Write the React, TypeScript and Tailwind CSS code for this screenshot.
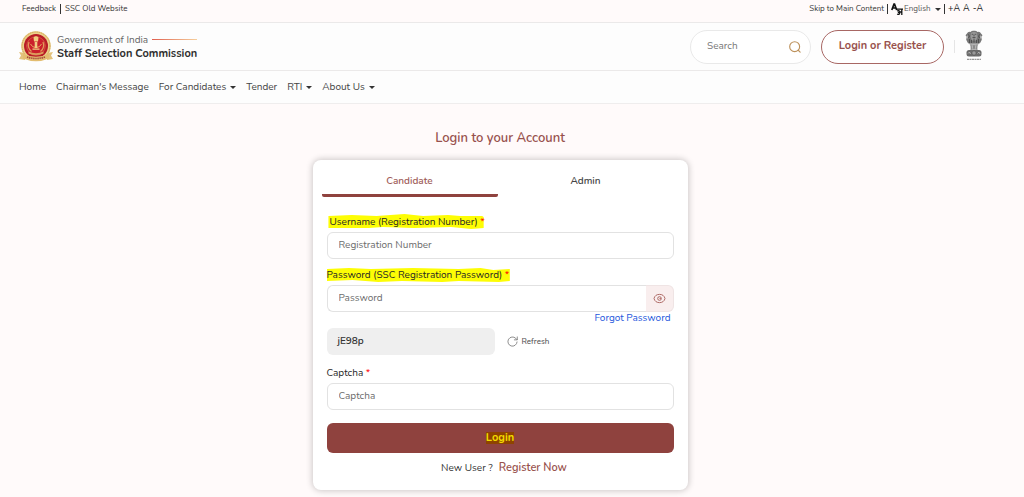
import React, { useState } from 'react';

interface NavEntry {
    label: string;
    hasMenu?: boolean;
}

const navEntries: NavEntry[] = [
    { label: 'Home' },
    { label: "Chairman's Message" },
    { label: 'For Candidates', hasMenu: true },
    { label: 'Tender' },
    { label: 'RTI', hasMenu: true },
    { label: 'About Us', hasMenu: true },
];

const inputClass = 'block w-full h-[27px] rounded-md border border-[#e2e2e2] bg-white px-[11px] pb-0.5 text-[10px] text-[#333] placeholder:text-[#6c6c6c] outline-none focus:border-[#8f423e]';

const Caret = () => (
    <svg viewBox="0 0 6 3" className="w-1.5 h-[3px] shrink-0" fill="#333" aria-hidden="true">
        <path d="M0 0h6L3 3z" />
    </svg>
);

const SscLogo = () => (
    <svg viewBox="0 0 36 32" className="w-9 h-8 shrink-0" role="img" aria-label="SSC">
        <path d="M1 21l6 1v7l-6-1 2-3.500zM35 21l-6 1v7l6-1-2-3.500z" fill="#e3c27c" />
        <circle cx="18" cy="15" r="14.800" fill="#ecd08a" />
        <circle cx="18" cy="15" r="14" fill="none" stroke="#cda356" strokeWidth="1" strokeDasharray="1.500 0.700" />
        <circle cx="18" cy="15" r="12" fill="#b81c26" />
        <circle cx="18" cy="15" r="9.300" fill="#cb202b" stroke="#d8704f" strokeWidth="0.700" />
        <path d="M11 11a8.500 8.500 0 0 0 2.500 9.500M25 11a8.500 8.500 0 0 1-2.500 9.500" fill="none" stroke="#e09a5a" strokeWidth="1.300" />
        <path d="M12.500 13a6 6 0 0 0 11 0" fill="none" stroke="#e8a960" strokeWidth="1" />
        <path d="M15.500 6.500q2.500-2.500 5 0l-.5 4h-4zM16.700 11h2.600v6h-2.600zM14.500 17.500h7v1.300h-7z" fill="#f1cd82" />
        <path d="M10.500 20.500q7.500 3.500 15 0v2q-7.500 3-15 0z" fill="#dd9e5c" />
        <path d="M5 23q13 5.500 26 0v4.500q-13 5.500-26 0z" fill="#e3bd70" />
        <path d="M9 26q9 3 18 0" fill="none" stroke="#a5463b" strokeWidth="1.600" strokeDasharray="1.400 0.700" />
    </svg>
);

const StateEmblem = () => (
    <svg viewBox="0 0 18 31" className="w-[18px] h-[31px] shrink-0" role="img" aria-label="State Emblem of India">
        <path d="M5.500 2Q7 .3 9 .8q2-.5 3.500 1.200 2.500-.7 3.500 1.500l1.500 1.800-1.200 1.400.5 3-1.500 3-1.300 1H4l-1.300-1-1.500-3 .5-3L.5 5.300 2 3.500Q3 1.300 5.500 2z" fill="#777" />
        <path d="M6 3q3-2 6 0l.5 4-1.500 3.500H7L5.500 7z" fill="#999" />
        <path d="M6.700 4.300h1.500m1.600 0h1.500M9 4.500v2M7.500 7.500h3M3 4.500l1.500 1.300L3.500 8m11.500-3.500-1.500 1.300 1 2.200M4.500 9v4M13.500 9v4M6.500 10v3m5-3v3M9 8.500v4" fill="none" stroke="#3d3d3d" strokeWidth="0.700" />
        <path d="M2.500 5.500v3M15.500 5.500v3" stroke="#c4c4c4" strokeWidth="0.700" />
        <path d="M4.500 14h9l-1 2.200v3l1 1.300h-9l1-1.300v-3z" fill="#b4b4b4" />
        <path d="M6 14.500l.5 5M12 14.500l-.5 5M8 15l2 4M10 15l-2 4" stroke="#666" strokeWidth="0.600" />
        <rect x="1.500" y="20" width="15" height="6.500" rx="2.500" fill="#6b6b6b" />
        <circle cx="9" cy="23" r="2" fill="#ddd" stroke="#444" strokeWidth="0.600" />
        <path d="M9 21v4M7 23h4" stroke="#444" strokeWidth="0.500" />
        <path d="M3 23.500l1.500-1.500 1 2M12.500 23.500l1.500-1.500 1 2" fill="none" stroke="#ccc" strokeWidth="0.700" />
        <path d="M2 29.300h14" stroke="#999" strokeWidth="1.300" strokeDasharray="2.500 0.500 1.500 0.500" />
    </svg>
);

const TitleRule = () => (
    <svg viewBox="0 0 45 2" className="ml-1 w-[45px] h-0.5 shrink-0" aria-hidden="true">
        <defs>
            <linearGradient id="title-rule" x1="0" y1="0" x2="1" y2="0">
                <stop offset="0" stopColor="#e0604f" />
                <stop offset="1" stopColor="#f6cf9c" />
            </linearGradient>
        </defs>
        <rect width="45" height="1" fill="url(#title-rule)" />
    </svg>
);

const SearchIcon = () => (
    <svg viewBox="0 0 14 14" className="w-3 h-3" fill="none" stroke="#bd915b" strokeWidth="1.300" strokeLinecap="round" aria-hidden="true">
        <circle cx="6.600" cy="6.600" r="5.800" />
        <path d="M10.800 10.800L13 13" />
    </svg>
);

const EyeIcon = () => (
    <svg viewBox="0 0 14 12" className="w-[13px] h-[11px]" fill="none" stroke="#a8605c" strokeWidth="1" aria-hidden="true">
        <path d="M1 6q1.200-4.500 6-4.500T13 6q-1.200 4.500-6 4.500T1 6z" />
        <circle cx="7" cy="6" r="2" />
        <path d="M7 6h1.500" />
    </svg>
);

const RefreshIcon = () => (
    <svg viewBox="0 0 12 12" className="w-[11px] h-[11px]" fill="none" stroke="#777" strokeWidth="0.900" strokeLinecap="round" strokeLinejoin="round" aria-hidden="true">
        <path d="M11 6.500A5 5 0 1 1 9.500 2.500L11 4" />
        <path d="M11.200 1v3.200H8" />
    </svg>
);

const TopBar = () => (
    <div className="flex h-[23px] items-center justify-between border-b border-[#ebe9e9] bg-[#fffafa] pb-1 pl-[22px] pr-[41px] text-[8px] text-[#333]">
        <div className="flex items-center">
            <a href="#feedback" className="border-r border-[#333] pr-1 leading-[10px]">Feedback</a>
            <a href="#old" className="pl-1">SSC Old Website</a>
        </div>
        <div className="flex items-center">
            <a href="#main" className="border-r border-[#333] pr-[3px] leading-[10px]">Skip to Main Content</a>
            <svg viewBox="0 0 12 12" className="ml-[3px] w-3 h-3" fill="none" stroke="#111" strokeWidth="1.700" aria-hidden="true">
                <path d="M.8 7L3 1h.5l2.200 6M1.500 5h3.500" />
                <path d="M5.800 6.200h6.200M10.800 6.200V12M6 8q2.500-1 2.300.8Q8 10 7 9.500q2 0 1.500 1.400-1 1-2.300 0M8.500 9h2" strokeWidth="1.300" />
            </svg>
            <div className="flex items-center border-r border-[#333] pr-[3px] leading-[10px]">
                <select aria-label="Language" defaultValue="en" className="appearance-none bg-transparent pl-px pr-1 text-[#555] outline-none">
                    <option value="en">English</option>
                </select>
                <Caret />
            </div>
            <div className="flex items-center gap-[3px] pl-[3px] text-[9px] font-medium text-[#222]">
                <button type="button">+A</button>
                <button type="button">A</button>
                <button type="button">-A</button>
            </div>
        </div>
    </div>
);

const Header = () => (
    <header className="flex h-12 items-center justify-between border-b border-[#ebe9e9] bg-[#fdfdfd] pl-[18px] pr-[41px]">
        <a href="#home" className="flex items-center gap-[3px]">
            <SscLogo />
            <div>
                <div className="flex items-center text-[10px] leading-[14px] text-[#666]">
                    Government of India
                    <TitleRule />
                </div>
                <div className="text-[11px] font-bold leading-[14px] text-[#2e2e2e]">Staff Selection Commission</div>
            </div>
        </a>
        <div className="flex items-center">
            <form className="flex h-[34px] w-[121px] items-center rounded-full border border-[#e9e9e9] bg-white pl-4 pr-[9px]">
                <input type="search" aria-label="Search" placeholder="Search" className="min-w-0 flex-1 bg-transparent text-[10px] outline-none placeholder:text-[#777]" />
                <button type="button" aria-label="Submit search"><SearchIcon /></button>
            </form>
            <button type="button" className="ml-2.5 h-[34px] w-[123px] rounded-full border border-[#a86764] bg-white text-[11px] font-bold text-[#98514d]">
                Login or Register
            </button>
            <span className="ml-2.5 mr-2.5 h-[13px] w-px bg-[#e5e5e5]" />
            <div className="pb-[3px]">
                <StateEmblem />
            </div>
        </div>
    </header>
);

const NavBar = () => (
    <nav className="flex h-[33px] items-center gap-2.5 border-b border-[#efeded] bg-[#fdfdfd] pl-[19px] text-[10px] text-[#444]">
        {navEntries.map((entry) =>
            entry.hasMenu ? (
                <button key={entry.label} type="button" className="flex items-center gap-1">
                    {entry.label}
                    <Caret />
                </button>
            ) : (
                <a key={entry.label} href="#">{entry.label}</a>
            )
        )}
    </nav>
);

interface FieldLabelProps {
    htmlFor: string;
    text: string;
    marker?: string;
}

// marker is the outline of the highlighter stroke in a 100 x 14 box
const FieldLabel: React.FC<FieldLabelProps> = ({ htmlFor, text, marker }) => (
    <label htmlFor={htmlFor} className="flex h-5 items-center text-[10px] text-[#262626]">
        <span className="relative isolate leading-[14px]">
            {marker && (
                <svg viewBox="0 0 100 14" preserveAspectRatio="none" className="absolute inset-0 -z-10 h-full w-full overflow-visible" fill="#fdfd05" aria-hidden="true">
                    <path d={marker} />
                </svg>
            )}
            {text} <span className="text-[#f00]">*</span>
        </span>
    </label>
);

const LoginCard = () => {
    const [tab, setTab] = useState('Candidate');
    const [showPassword, setShowPassword] = useState(false);

    return (
        <div className="w-full max-w-[375px] rounded-lg bg-white pb-3 pt-1.5 shadow-[0_0_6px_1px_rgba(0,0,0,0.2)]">
            <div role="tablist" className="grid grid-cols-2 pl-[9px] pr-[14px]">
                {['Candidate', 'Admin'].map((name) => (
                    <button
                        key={name}
                        type="button"
                        role="tab"
                        aria-selected={tab === name}
                        onClick={() => setTab(name)}
                        className={`h-[31px] rounded-[2px] border-b-[3px] pt-0.5 text-[10px] font-semibold ${tab === name ? 'border-[#8f423e] text-[#a05d5a]' : 'border-transparent text-[#444]'}`}
                    >
                        {name}
                    </button>
                ))}
            </div>

            <form className="mt-[15px] px-[14px]" onSubmit={(e) => e.preventDefault()}>
                <div className="pl-[3px]">
                    <FieldLabel htmlFor="username" text="Username (Registration Number)" marker="M-1 1L14 0 30 1 48 -1 60 1 76 0 84 1 98 1 99 2V13L91 14 78 12 54 13 34 12 25 13 -1 13z" />
                </div>
                <input id="username" type="text" placeholder="Registration Number" className={inputClass} />

                <div className="mt-1.5">
                    <FieldLabel htmlFor="password" text="Password (SSC Registration Password)" marker="M0 1L12 0 24 1 47 0 72 1 84 0 91 2 100 1V13L94 14 72 13 63 14 41 13 28 14 14 12 0 13z" />
                </div>
                <div className="flex">
                    <input id="password" type={showPassword ? 'text' : 'password'} placeholder="Password" className={`${inputClass} rounded-r-none border-r-0`} />
                    <button
                        type="button"
                        aria-label="Show password"
                        onClick={() => setShowPassword(!showPassword)}
                        className="flex w-7 shrink-0 items-center justify-center rounded-r-md border border-l-0 border-[#efe4e4] bg-[#f9eeee]"
                    >
                        <EyeIcon />
                    </button>
                </div>
                <div className="flex h-3 items-center justify-end pr-[3px] text-[10px] text-[#2457dc]">
                    <a href="#forgot">Forgot Password</a>
                </div>

                <div className="mt-1 flex items-center">
                    <div className="flex h-[27px] w-[168px] items-center rounded-md bg-[#efefef] px-[11px] text-[10px] font-semibold text-[#333]">jE98p</div>
                    <button type="button" className="ml-3 flex items-center gap-1 text-[8px] font-medium text-[#555]">
                        <RefreshIcon />
                        Refresh
                    </button>
                </div>

                <div className="mt-2">
                    <FieldLabel htmlFor="captcha" text="Captcha" />
                </div>
                <input id="captcha" type="text" placeholder="Captcha" className={inputClass} />

                <button type="submit" className="mt-[13px] flex h-[30px] w-full items-center justify-center rounded-md bg-[#8f423e] text-[11px] font-bold text-[#f2dc00]">
                    <span className="bg-[#8f4300] leading-3">Login</span>
                </button>
                <div className="mt-[5px] flex h-5 items-center justify-center gap-1.5 pl-2 text-[10px] text-[#333]">
                    New User ?
                    <a href="#register" className="text-[11px] font-semibold text-[#98514d]">Register Now</a>
                </div>
            </form>
        </div>
    );
};

const App = () => (
    <div className="min-h-screen bg-[#fffafa] font-['Nunito','Open_Sans',sans-serif]">
        <TopBar />
        <Header />
        <NavBar />
        <main id="main" className="flex flex-col items-center pb-1.5 pr-6 pt-6">
            <h1 className="mb-3 h-5 text-[13px] font-semibold leading-5 text-[#98514d]">Login to your Account</h1>
            <LoginCard />
        </main>
    </div>
);

export default App;
